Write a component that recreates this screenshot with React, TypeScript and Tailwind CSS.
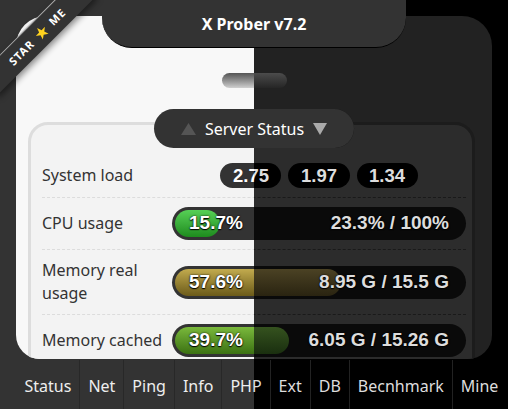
import React from "react";

type Theme = {
  page: string;
  title: string;
  card: string;
  handle: string;
  box: string;
  legend: string;
  up: string;
  down: string;
  label: string;
  sep: string;
  badge: string;
  track: string;
  barText: string;
  cpu: string;
  mem: string;
  cached: string;
  nav: string;
  navSep: string;
};

const light: Theme = {
  page: "bg-[#333333]",
  title: "bg-[#333333] border-black text-white",
  card: "bg-[#f8f8f8]",
  handle: "bg-gradient-to-b from-[#555555] to-[#d0d0d0]",
  box: "bg-[#f3f3f3] border-[#dddddd]",
  legend: "bg-[#333333] text-white",
  up: "fill-[#555555]",
  down: "fill-[#aaaaaa]",
  label: "text-[#333333]",
  sep: "border-[#dcdcdc]",
  badge: "bg-[#333333] text-white",
  track: "bg-[#333333]",
  barText: "text-white",
  cpu: "bg-gradient-to-b from-[#56d056] to-[#1d8c1d]",
  mem: "bg-gradient-to-b from-[#c2ab4e] to-[#6c5b19]",
  cached: "bg-gradient-to-b from-[#7ab93c] to-[#3c7212]",
  nav: "bg-[#333333] text-[#eeeeee]",
  navSep: "border-[#282828]",
};

const dark: Theme = {
  page: "bg-black",
  title: "bg-black border-[#3a3a3a] text-white",
  card: "bg-[#222222]",
  handle: "bg-gradient-to-b from-[#4c4c4c] to-[#262626]",
  box: "bg-[#2c2c2c] border-[#1c1c1c]",
  legend: "bg-[#0e0e0e] text-[#dddddd]",
  up: "fill-[#444444]",
  down: "fill-[#999999]",
  label: "text-[#dddddd]",
  sep: "border-[#1a1a1a]",
  badge: "bg-black text-[#dddddd]",
  track: "bg-[#0a0a0a]",
  barText: "text-[#dddddd]",
  cpu: "bg-gradient-to-b from-[#2c5c2c] to-[#123612]",
  mem: "bg-gradient-to-b from-[#4b4224] to-[#2a2411]",
  cached: "bg-gradient-to-b from-[#35521f] to-[#1a2f0f]",
  nav: "bg-black text-[#dddddd]",
  navSep: "border-[#222222]",
};

const tabs = ["Status", "Net", "Ping", "Info", "PHP", "Ext", "DB", "Becnhmark", "Mine"];

function Row({ t, label, first, children }: { t: Theme; label: string; first?: boolean; children: React.ReactNode }) {
  return (
    <div className={`flex items-center py-[9px] ${first ? "" : `border-t border-dashed ${t.sep}`}`}>
      <div className={`w-[130px] shrink-0 text-[16px] leading-[23px] ${t.label}`}>{label}</div>
      <div className="flex-1 min-w-0">{children}</div>
    </div>
  );
}

function Bar({ t, pct, fill, left, right }: { t: Theme; pct: number; fill: string; left: string; right: string }) {
  return (
    <div className={`relative h-[33px] rounded-full p-[3px] ${t.track}`}>
      <div className={`h-full rounded-full ${fill}`} style={{ width: `${pct}%` }} />
      <div
        className={`absolute inset-0 flex items-center justify-between px-[17px] font-['Liberation_Sans',Arial,sans-serif] font-bold text-[19px] [text-shadow:0_0_2px_#000,0_1px_1px_#000] ${t.barText}`}
      >
        <span>{left}</span>
        <span>{right}</span>
      </div>
    </div>
  );
}

function Scene({ t }: { t: Theme }) {
  return (
    <div className={`relative w-[508px] h-[409px] overflow-hidden flex flex-col font-['Noto_Sans',sans-serif] ${t.page}`}>
      <div className="h-[360px] shrink-0 flex flex-col">
        <h1
          className={`relative z-10 mx-auto w-[304px] h-[48px] shrink-0 rounded-b-[30px] border-b flex items-center justify-center text-[16px] font-bold ${t.title}`}
        >
          X Prober v7.2
        </h1>

        <main className={`-mt-[32px] mx-4 h-[343px] overflow-hidden rounded-t-[30px] rounded-b-[24px] flex flex-col ${t.card}`}>
          <div className={`mx-auto mt-[57px] w-[65px] h-[15px] shrink-0 rounded-full ${t.handle}`} />

          <div
            className={`relative z-10 mx-auto mt-[21px] h-[39px] shrink-0 rounded-full px-[27px] flex items-center gap-[9px] text-[16px] ${t.legend}`}
          >
            <svg width="15" height="12" viewBox="0 0 15 12" className={t.up}>
              <polygon points="7.5,0 15,12 0,12" />
            </svg>
            <span>Server Status</span>
            <svg width="14" height="12" viewBox="0 0 14 12" className={t.down}>
              <polygon points="0,0 14,0 7,12" />
            </svg>
          </div>

          <section className={`-mt-[26px] ml-[12px] mr-[17px] shrink-0 rounded-[20px] border-[3px] pt-[29px] pl-[11px] pr-[6px] pb-6 ${t.box}`}>
            <Row t={t} label="System load" first>
              <div className="flex justify-center gap-[7px] font-['Liberation_Sans',Arial,sans-serif] font-bold text-[18.5px]">
                {["2.75", "1.97", "1.34"].map((v) => (
                  <span key={v} className={`h-[25px] px-[12.5px] rounded-full flex items-center ${t.badge}`}>
                    {v}
                  </span>
                ))}
              </div>
            </Row>
            <Row t={t} label="CPU usage">
              <Bar t={t} pct={15.7} fill={t.cpu} left="15.7%" right="23.3% / 100%" />
            </Row>
            <Row t={t} label="Memory real usage">
              <Bar t={t} pct={57.6} fill={t.mem} left="57.6%" right="8.95 G / 15.5 G" />
            </Row>
            <Row t={t} label="Memory cached">
              <Bar t={t} pct={39.7} fill={t.cached} left="39.7%" right="6.05 G / 15.26 G" />
            </Row>
            <Row t={t} label="Memory buffers">
              <Bar t={t} pct={2.1} fill={t.cached} left="2.1%" right="0.32 G / 15.26 G" />
            </Row>
          </section>
        </main>
      </div>

      <nav className={`h-[49px] shrink-0 flex pl-[16.5px] text-[16px] ${t.nav}`}>
        {tabs.map((s, i) => (
          <a key={s} className={`h-full shrink-0 flex items-center px-[8px] pt-[2px] whitespace-nowrap ${i ? `border-l ${t.navSep}` : ""}`}>
            {s}
          </a>
        ))}
      </nav>

      <div className="absolute left-[-33px] top-[23px] z-20 w-[140px] h-[27px] -rotate-45 bg-[#333333] border-t border-white/60 shadow-[0_3px_6px_rgba(0,0,0,0.45)] flex items-center justify-center gap-[6px] text-white text-[11px] font-bold tracking-[1px]">
        <span>STAR</span>
        <svg width="14" height="14" viewBox="0 0 24 24" className="fill-[#ffd21f]">
          <polygon points="12,1 15,9 23,9 16.5,14 19,22 12,17 5,22 7.5,14 1,9 9,9" />
        </svg>
        <span>ME</span>
      </div>
    </div>
  );
}

export default function App() {
  return (
    <div className="grid w-[508px] h-[409px] overflow-hidden">
      <div className="col-start-1 row-start-1">
        <Scene t={light} />
      </div>
      <div className="col-start-1 row-start-1 [clip-path:inset(0_0_0_50%)]">
        <Scene t={dark} />
      </div>
    </div>
  );
}
